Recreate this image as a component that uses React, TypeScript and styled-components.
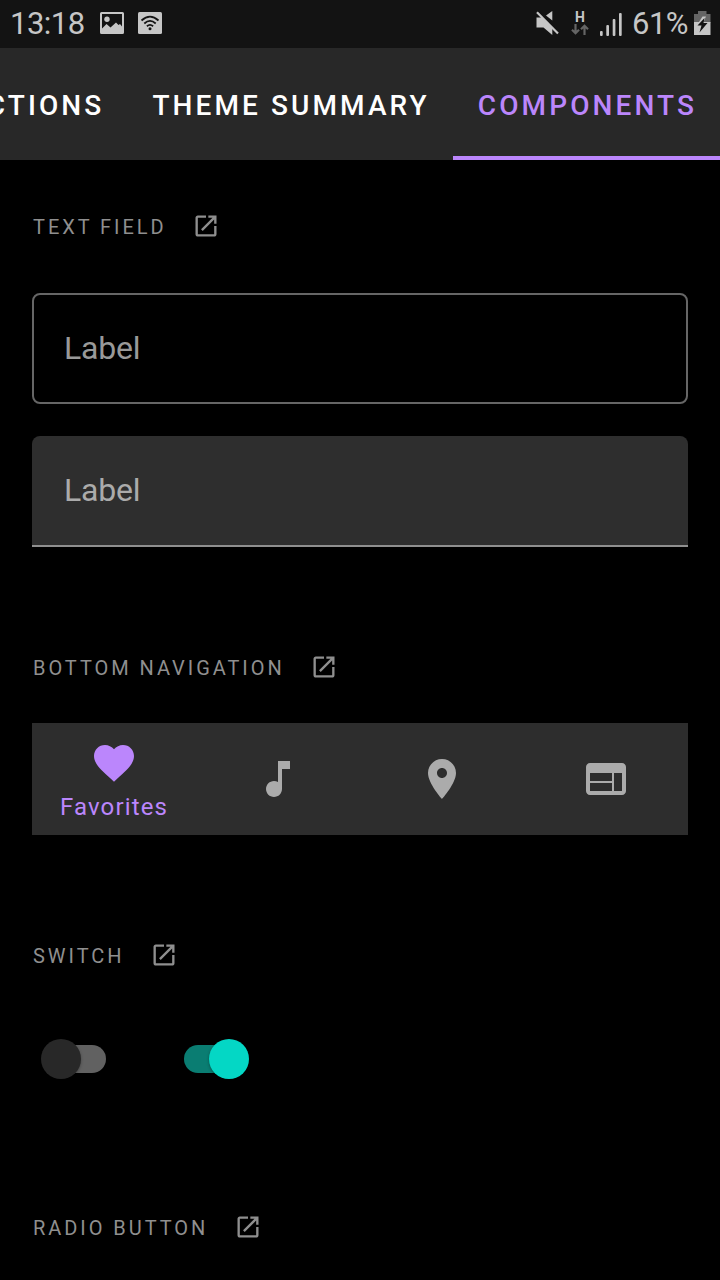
import React from "react";
import styled, { createGlobalStyle } from "styled-components";

const GlobalStyle = createGlobalStyle`
  * { box-sizing: border-box; }
  body { margin: 0; background: #000; font-family: Roboto, "Liberation Sans", sans-serif; }
`;

const Screen = styled.div`
  width: 720px;
  height: 1280px;
  overflow: hidden;
  background: #000;
  display: flex;
  flex-direction: column;
`;

const StatusBar = styled.header`
  flex: none;
  height: 48px;
  padding: 0 9px 0 10px;
  background: #131313;
  color: #c6c6c6;
  display: flex;
  align-items: center;
  justify-content: space-between;
`;

const StatusGroup = styled.div`
  display: flex;
  align-items: center;
`;

const StatusText = styled.span<{ $width: number; $gap?: number }>`
  width: ${(p) => p.$width}px;
  margin-left: ${(p) => p.$gap ?? 0}px;
  font-size: 31px;
  letter-spacing: -0.5px;
  line-height: 48px;
  white-space: nowrap;
`;

const StatusIcon = styled.svg<{ $gap?: number; $lift?: number }>`
  display: block;
  flex: none;
  margin-left: ${(p) => p.$gap ?? 0}px;
  margin-bottom: ${(p) => p.$lift ?? 0}px;
`;

const Network = styled.div`
  width: 20px;
  margin-left: 10px;
  padding-bottom: 2px;
  display: flex;
  flex-direction: column;
  align-items: center;
  font-size: 14px;
  font-weight: 700;
  line-height: 13px;
`;

const TabBar = styled.nav`
  flex: none;
  height: 112px;
  background: #282828;
  display: flex;
  justify-content: flex-end;
`;

const Tab = styled.div<{ $active?: boolean }>`
  flex: none;
  padding: 4px 23px 0 25px;
  border-bottom: 4px solid ${(p) => (p.$active ? "#bb86fc" : "transparent")};
  color: ${(p) => (p.$active ? "#bb86fc" : "#fff")};
  font-size: 28px;
  font-weight: 500;
  letter-spacing: 3.1px;
  line-height: 108px;
  white-space: nowrap;
`;

const Content = styled.main`
  display: flex;
  flex-direction: column;
  padding: 52px 32px 0;
`;

const Section = styled.section<{ $height: number }>`
  height: ${(p) => p.$height}px;
  flex: none;
`;

const Heading = styled.div`
  height: 28px;
  display: flex;
  align-items: center;
  gap: 25.3px;
  color: #8f8f8f;
`;

const HeadingText = styled.h2`
  margin: 0;
  padding: 2px 0 0 1px;
  font-size: 20px;
  font-weight: 400;
  letter-spacing: 2.95px;
  line-height: 28px;
  white-space: nowrap;
`;

const OutlinedField = styled.div`
  height: 111px;
  margin-top: 53px;
  border: 2px solid #666;
  border-radius: 8px;
  padding: 0 30px;
  color: #999;
  font-size: 32px;
  letter-spacing: -0.2px;
  line-height: 107px;
`;

const FilledField = styled.div`
  height: 111px;
  margin-top: 32px;
  border-bottom: 2px solid #8f8f8f;
  border-radius: 8px 8px 0 0;
  padding: 0 32px;
  background: #2e2e2e;
  color: #ababab;
  font-size: 32px;
  letter-spacing: -0.2px;
  line-height: 109px;
`;

const BottomNav = styled.div`
  height: 112px;
  margin-top: 42px;
  background: #2d2d2d;
  display: flex;
`;

const NavItem = styled.div<{ $active?: boolean }>`
  flex: 1;
  display: flex;
  flex-direction: column;
  align-items: center;
  padding-top: ${(p) => (p.$active ? 16 : 32)}px;
  color: ${(p) => (p.$active ? "#bb86fc" : "#ababab")};
`;

const NavLabel = styled.span`
  font-size: 24px;
  line-height: 28px;
  margin-top: 6px;
  letter-spacing: 1.15px;
`;

const Switches = styled.div`
  display: flex;
  gap: 78px;
  margin: 70px 0 0 9px;
`;

const SwitchBox = styled.div`
  display: grid;
  width: 65px;
  height: 40px;
  align-items: center;
  grid-template-areas: "control";
`;

const SwitchTrack = styled.div<{ $on?: boolean }>`
  grid-area: control;
  justify-self: ${(p) => (p.$on ? "start" : "end")};
  width: 51px;
  height: 28px;
  border-radius: 14px;
  background: ${(p) => (p.$on ? "#0a7d72" : "#616161")};
`;

const SwitchThumb = styled.div<{ $on?: boolean }>`
  grid-area: control;
  justify-self: ${(p) => (p.$on ? "end" : "start")};
  width: 40px;
  height: 40px;
  border-radius: 50%;
  background: ${(p) => (p.$on ? "#04d7c5" : "#282828")};
  box-shadow: 0 1px 3px rgba(0, 0, 0, 0.35);
`;

const Glyph = ({ size, d }: { size: number; d: string }) => (
  <svg width={size} height={size} viewBox="0 0 24 24" fill="currentColor">
    <path d={d} />
  </svg>
);

const OPEN =
  "M19 19H5V5h7V3H5c-1.11 0-2 .9-2 2v14c0 1.1.89 2 2 2h14c1.1 0 2-.9 2-2v-7h-2v7zM14 3v2h3.59l-9.83 9.83 1.41 1.41L19 6.41V10h2V3h-7z";
const HEART =
  "M12 21.35l-1.45-1.32C5.4 15.36 2 12.28 2 8.5 2 5.42 4.42 3 7.5 3c1.74 0 3.41.81 4.5 2.09C13.09 3.81 14.76 3 16.5 3 19.58 3 22 5.42 22 8.5c0 3.78-3.4 6.86-8.55 11.54L12 21.35z";
const NOTE =
  "M12 3v10.55c-.59-.34-1.27-.55-2-.55-2.21 0-4 1.79-4 4s1.79 4 4 4 4-1.79 4-4V7h4V3h-6z";
const PLACE =
  "M12 2C8.13 2 5 5.13 5 9c0 5.25 7 13 7 13s7-7.75 7-13c0-3.87-3.13-7-7-7zm0 9.5c-1.38 0-2.5-1.12-2.5-2.5s1.12-2.5 2.5-2.5 2.5 1.12 2.5 2.5-1.12 2.5-2.5 2.5z";
const WEB =
  "M20 4H4c-1.1 0-1.99.9-1.99 2L2 18c0 1.1.9 2 2 2h16c1.1 0 2-.9 2-2V6c0-1.1-.9-2-2-2zm-5 14H4v-4h11v4zm0-5H4V9h11v4zm5 5h-4V9h4v9z";

const Title = ({ children }: { children: React.ReactNode }) => (
  <Heading>
    <HeadingText>{children}</HeadingText>
    <Glyph size={28} d={OPEN} />
  </Heading>
);

const Switch = ({ on }: { on?: boolean }) => (
  <SwitchBox>
    <SwitchTrack $on={on} />
    <SwitchThumb $on={on} />
  </SwitchBox>
);

export default function App() {
  return (
    <Screen>
      <GlobalStyle />
      <StatusBar>
        <StatusGroup>
          <StatusText $width={90}>13:18</StatusText>
          <StatusIcon $lift={2} width="24" height="22" viewBox="0 0 24 22">
            <path fill="currentColor" fillRule="evenodd" d="M1.5 0h21A1.5 1.5 0 0 1 24 1.5v19a1.5 1.5 0 0 1-1.5 1.5h-21A1.5 1.5 0 0 1 0 20.5v-19A1.5 1.5 0 0 1 1.5 0zM2 2v14.5l4.5-4.5 4 3.5 5.5-5 2.5 2.5 1.500-1 2 2.500V2z" />
            <circle cx="7" cy="7.3" r="2.7" fill="currentColor" />
          </StatusIcon>
          <StatusIcon $gap={14} $lift={2} width="24" height="22" viewBox="0 0 24 22" fill="none">
            <rect width="24" height="22" rx="1.5" fill="currentColor" />
            <g stroke="#131313" strokeWidth="1.8">
              <path d="M3.5 8.5Q12 .8 20.5 8.5" />
              <path d="M6.3 11.5Q12 6.3 17.7 11.5" />
              <path d="M8.9 14.2Q12 11.5 15.1 14.2" />
            </g>
            <circle cx="12" cy="16.7" r="1.5" fill="#131313" />
          </StatusIcon>
        </StatusGroup>
        <StatusGroup>
          <StatusIcon width="24" height="26" viewBox="0 0 24 26">
            <path fill="currentColor" d="M.5 6.5h6L16.3 17v7L7.5 16.5h-7zM10 4.5L16.3 0v9.5z" />
            <path d="M2.5 0L23.5 21.5" stroke="#131313" strokeWidth="2" />
            <path d="M1 1.3L22 22.5" stroke="currentColor" strokeWidth="2.2" />
          </StatusIcon>
          <Network>
            H
            <svg width="18" height="11" viewBox="0 0 18 11" fill="none" stroke="#656565" strokeWidth="2.2">
              <path d="M4.5 0v9M1 5.8l3.500 3.500L8 5.800M13.500 11V2M10 5.200l3.500-3.500L17 5.200" />
            </svg>
          </Network>
          <StatusIcon $gap={10} width="22" height="23" viewBox="0 0 22 23" fill="currentColor">
            <rect x="0" y="18" width="2.7" height="5" rx="1" />
            <rect x="6.3" y="12" width="2.7" height="11" rx="1" />
            <rect x="12.7" y="6" width="2.7" height="17" rx="1" />
            <rect x="19" y="0" width="2.7" height="23" rx="1" />
          </StatusIcon>
          <StatusText $width={62} $gap={10}>61%</StatusText>
          <StatusIcon $lift={2} width="17" height="24" viewBox="0 0 17 24">
            <path fill="#656565" d="M4 0h8.5v3h4v9H0V3h4z" />
            <path fill="currentColor" d="M0 11h16.5v13H0z" />
            <path fill="currentColor" d="M8.5 5.5h3.500l-2.500 5.500H5z" />
            <path fill="#131313" d="M10.500 7L3.500 14.500h4l-2 7 8-9.500H9.500z" />
          </StatusIcon>
        </StatusGroup>
      </StatusBar>
      <TabBar>
        <Tab>INSTRUCTIONS</Tab>
        <Tab>THEME SUMMARY</Tab>
        <Tab $active>COMPONENTS</Tab>
      </TabBar>
      <Content>
        <Section $height={441}>
          <Title>TEXT FIELD</Title>
          <OutlinedField>Label</OutlinedField>
          <FilledField>Label</FilledField>
        </Section>
        <Section $height={288}>
          <Title>BOTTOM NAVIGATION</Title>
          <BottomNav>
            <NavItem $active>
              <Glyph size={48} d={HEART} />
              <NavLabel>Favorites</NavLabel>
            </NavItem>
            <NavItem>
              <Glyph size={48} d={NOTE} />
            </NavItem>
            <NavItem>
              <Glyph size={48} d={PLACE} />
            </NavItem>
            <NavItem>
              <Glyph size={48} d={WEB} />
            </NavItem>
          </BottomNav>
        </Section>
        <Section $height={272}>
          <Title>SWITCH</Title>
          <Switches>
            <Switch />
            <Switch on />
          </Switches>
        </Section>
        <Section $height={28}>
          <Title>RADIO BUTTON</Title>
        </Section>
      </Content>
    </Screen>
  );
}
